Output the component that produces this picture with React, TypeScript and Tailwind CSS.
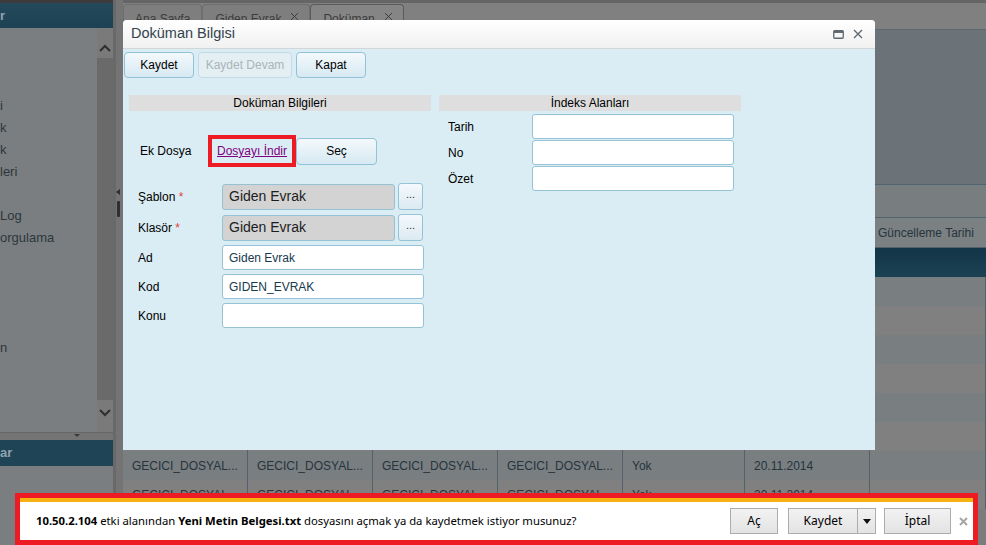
import { X } from "lucide-react"

const sideItems = ["", "", "", "i", "k", "k", "leri", "", "Log", "orgulama", "", "", "", "", "n"]

const gridCols = ["w-[125px]", "w-[125px]", "w-[125px]", "w-[125px]", "w-[122px]", "w-[125px]", "flex-1"]

const dataRows = [
  ["GECICI_DOSYAL...", "GECICI_DOSYAL...", "GECICI_DOSYAL...", "GECICI_DOSYAL...", "Yok", "20.11.2014", ""],
  ["GECICI_DOSYAL...", "GECICI_DOSYAL...", "GECICI_DOSYAL...", "GECICI_DOSYAL...", "Yok", "20.11.2014", ""],
]

function GridRow({ cells, dark }: { cells: string[]; dark: boolean }) {
  return (
    <div className={`flex h-[29px] shrink-0 ${dark ? "bg-[#797e81]" : "bg-[#808080]"}`}>
      {gridCols.map((w, i) => (
        <div
          key={i}
          className={`${w} flex items-center border-r border-[#55616a] pl-[9px] text-[12px] text-[#26343d] whitespace-nowrap overflow-hidden`}
        >
          {cells[i]}
        </div>
      ))}
    </div>
  )
}

function BlueButton({ children, className = "", disabled = false }: { children: React.ReactNode; className?: string; disabled?: boolean }) {
  return (
    <div
      className={`flex items-center justify-center rounded-[4px] border text-[12px] ${
        disabled
          ? "border-[#c3dbe6] bg-[#e4eff4] text-[#a9b4b9]"
          : "border-[#91c2d7] bg-gradient-to-b from-[#f3f9fc] to-[#d7e9f2] text-black"
      } ${className}`}
    >
      {children}
    </div>
  )
}

function Field({ label, req = false, value = "", gray = false, picker = false }: { label: string; req?: boolean; value?: string; gray?: boolean; picker?: boolean }) {
  return (
    <div className="flex items-center">
      <div className="w-[93px] pl-[9px] text-[12px] text-black">
        {label}
        {req && <span className="text-[#e0433a]"> *</span>}
      </div>
      {gray ? (
        <div className="flex items-center gap-[3px]">
          <div className="flex h-[26px] w-[173px] items-center rounded-[3px] border border-[#96c2d6] bg-[#d3d3d3] pl-[6px] text-[14px] text-[#1d1d1d]">
            {value}
          </div>
          {picker && (
            <div className="flex h-[27px] w-[25px] items-center justify-center rounded-[3px] border border-[#96c2d6] bg-gradient-to-b from-[#f4f9fc] to-[#dbeaf2] pb-[4px] text-[11px] text-[#333]">
              ...
            </div>
          )}
        </div>
      ) : (
        <div className="flex h-[25px] w-[202px] items-center rounded-[3px] border border-[#96c2d6] bg-white pl-[6px] text-[12px] text-[#17394d]">
          {value}
        </div>
      )}
    </div>
  )
}

export default function App() {
  return (
    <div className="relative h-[545px] w-[986px] overflow-hidden bg-[#7c7c7c] font-['Liberation_Sans',Arial,sans-serif]">
      {/* dimmed application behind the dialog */}
      <div className="flex h-full">
        <div className="flex w-[113px] flex-col bg-[#7b7e80]">
          <div className="h-[3px] bg-[#3c3c3c]" />
          <div className="flex h-[25px] items-center bg-gradient-to-b from-[#24495a] to-[#1d4253] text-[13px] font-bold text-[#8fa3ad]">
            <span>r</span>
          </div>
          <div className="flex h-[404px]">
            <div className="flex-1 pt-[1px] text-[13px] text-[#2c373d]">
              {sideItems.map((t, i) => (
                <div key={i} className="flex h-[22px] items-center overflow-hidden whitespace-nowrap">
                  <span>{t}</span>
                </div>
              ))}
            </div>
            <div className="flex w-[16px] flex-col bg-[#7a7a7a]">
              <div className="h-[8px]" />
              <svg width="16" height="10" viewBox="0 0 16 10" className="mt-[7px]">
                <path d="M3 8 L8 3 L13 8" fill="none" stroke="#2f2f2f" strokeWidth="2" />
              </svg>
              <div className="mt-[5px] h-[342px] bg-[#6a6a6a]" />
              <div className="flex-1" />
              <svg width="16" height="10" viewBox="0 0 16 10" className="mb-[14px]">
                <path d="M3 2 L8 7 L13 2" fill="none" stroke="#2f2f2f" strokeWidth="2" />
              </svg>
            </div>
          </div>
          <div className="flex h-[8px] items-start justify-center border-t border-[#666] bg-[#747474] pl-[40px]">
            <svg width="8" height="5" viewBox="0 0 8 5">
              <path d="M1 1 L7 1 L4 4 Z" fill="#3a3a3a" />
            </svg>
          </div>
          <div className="flex h-[26px] items-center bg-[#1f4455] text-[13px] font-bold text-[#8fa3ad]">
            <span>ar</span>
          </div>
          <div className="flex-1 bg-[#7b7e80]" />
        </div>
        <div className="flex w-[10px] items-center border-l-[3px] border-[#696969] bg-[#747474]">
          <div className="mt-[-140px] flex flex-col items-center gap-[6px]">
            <svg width="5" height="6" viewBox="0 0 5 6">
              <path d="M4 0 L0 3 L4 6 Z" fill="#2f2f2f" />
            </svg>
            <div className="h-[16px] w-[3px] rounded-[1px] bg-[#2f2f2f]" />
          </div>
        </div>
        <div className="flex flex-1 flex-col">
          <div className="h-[3px] bg-[#656565]" />
          <div className="flex h-[27px] items-start border-b border-[#5f6a70] bg-[#808080] pt-[1px]">
            {["Ana Sayfa", "Giden Evrak", "Doküman"].map((t, i) => (
              <div
                key={t}
                className={`flex h-[26px] items-start gap-[7px] rounded-t-[4px] border border-b-0 pt-[5px] text-[12px] ${
                  i === 0 ? "px-[11px]" : "pl-[12px] pr-[8px]"
                } ${i === 2 ? "border-[#5a5a5a] bg-[#858585] text-[#3a3a3a]" : "border-[#6e6e6e] bg-[#7e7e7e] text-[#3c3c3c]"}`}
              >
                {t}
                {i > 0 && <X size={13} strokeWidth={1.6} className="mt-[0px] text-[#333]" />}
              </div>
            ))}
          </div>
          <div className="h-[154px] bg-[#6b7379]" />
          <div className="h-[34px] border-y border-[#4f6470] bg-[#787e80]" />
          <div className="flex h-[30px] shrink-0 border-b border-[#55616a] bg-[#7b8083]">
            {gridCols.map((w, i) => (
              <div key={i} className={`${w} flex items-center pl-[8px] text-[12px] text-[#26343d]`}>
                {i === 6 ? "Güncelleme Tarihi" : ""}
              </div>
            ))}
          </div>
          <div className="h-[29px] shrink-0 bg-gradient-to-b from-[#123547] to-[#1b4253]" />
          <GridRow cells={[]} dark />
          <GridRow cells={[]} dark={false} />
          <GridRow cells={[]} dark />
          <GridRow cells={[]} dark={false} />
          <GridRow cells={[]} dark />
          <GridRow cells={[]} dark={false} />
          <GridRow cells={dataRows[0]} dark />
          <GridRow cells={dataRows[1]} dark={false} />
        </div>
      </div>

      {/* dialog */}
      <div className="absolute left-[123px] top-[20px] flex h-[430px] w-[752px] flex-col overflow-hidden rounded-t-[4px] bg-[#daecf4]">
        <div className="flex h-[29px] shrink-0 items-center justify-between border-b border-[#d3d6d8] bg-gradient-to-b from-[#ffffff] to-[#f1f1f1] pl-[8px] pr-[12px]">
          <span className="text-[14.5px] text-[#34434d]">Doküman Bilgisi</span>
          <div className="flex items-center gap-[9px]">
            <svg width="11" height="9" viewBox="0 0 11 9">
              <rect x="0.75" y="0.75" width="9.5" height="7.5" rx="1" fill="none" stroke="#5c6770" strokeWidth="1.3" />
              <rect x="0.75" y="0.75" width="9.5" height="2.2" fill="#5c6770" />
            </svg>
            <svg width="10" height="10" viewBox="0 0 10 10">
              <path d="M1 1 L9 9 M9 1 L1 9" stroke="#5c6770" strokeWidth="1.3" />
            </svg>
          </div>
        </div>
        <div className="flex gap-[4px] pl-[1px] pt-[3px]">
          <BlueButton className="h-[26px] w-[70px]">Kaydet</BlueButton>
          <BlueButton className="h-[26px] w-[94px]" disabled>
            Kaydet Devam
          </BlueButton>
          <BlueButton className="h-[26px] w-[70px]">Kapat</BlueButton>
        </div>
        <div className="flex gap-[8px] pl-[6px] pt-[17px]">
          <div className="flex w-[302px] flex-col">
            <div className="flex h-[16px] items-center justify-center bg-[#dedede] text-[12px] text-black">Doküman Bilgileri</div>
            <div className="flex items-center pt-[24px]">
              <div className="w-[79px] pl-[11px] text-[12px] text-black">Ek Dosya</div>
              <div className="flex h-[32px] w-[88px] items-center justify-center border-[4px] border-[#ed1c24]">
                <span className="text-[12px] text-[#800080] underline">Dosyayı İndir</span>
              </div>
              <BlueButton className="h-[27px] w-[81px] text-[12px]">Seç</BlueButton>
            </div>
            <div className="flex flex-col gap-[4px] pt-[16px]">
              <Field label="Şablon" req gray picker value="Giden Evrak" />
              <Field label="Klasör" req gray picker value="Giden Evrak" />
              <Field label="Ad" value="Giden Evrak" />
              <Field label="Kod" value="GIDEN_EVRAK" />
              <Field label="Konu" />
            </div>
          </div>
          <div className="flex w-[302px] flex-col">
            <div className="flex h-[16px] items-center justify-center bg-[#dedede] text-[12px] text-black">İndeks Alanları</div>
            <div className="flex flex-col gap-[1px] pt-[3px]">
              {["Tarih", "No", "Özet"].map((l) => (
                <div key={l} className="flex items-center">
                  <div className="w-[93px] pl-[9px] text-[12px] text-black">{l}</div>
                  <div className="h-[25px] w-[202px] rounded-[3px] border border-[#96c2d6] bg-white" />
                </div>
              ))}
            </div>
          </div>
        </div>
      </div>

      {/* download notification bar */}
      <div className="absolute left-[15px] top-[493px] flex h-[52px] w-[963px] flex-col border-[5px] border-[#ed1c24] bg-white font-['Noto_Sans',sans-serif]">
        <div className="h-[4px] shrink-0 bg-[#f5b211]" />
        <div className="flex flex-1 items-center pl-[16px] pr-[5px] text-[12px] text-black">
          <div className="flex-1 whitespace-nowrap text-[11.3px]">
            <b>10.50.2.104</b> etki alanından <b>Yeni Metin Belgesi.txt</b> dosyasını açmak ya da kaydetmek istiyor musunuz?
          </div>
          <div className="flex h-[26px] w-[48px] items-center justify-center border border-[#acacac] bg-gradient-to-b from-[#f2f2f2] to-[#e3e3e3]">Aç</div>
          <div className="ml-[10px] flex h-[26px] w-[88px] border border-[#acacac] bg-gradient-to-b from-[#f2f2f2] to-[#e3e3e3]">
            <div className="flex flex-1 items-center justify-center border-r border-[#acacac]">Kaydet</div>
            <div className="flex w-[17px] items-center justify-center">
              <svg width="8" height="5" viewBox="0 0 8 5">
                <path d="M0 0 L8 0 L4 5 Z" fill="#111" />
              </svg>
            </div>
          </div>
          <div className="ml-[8px] flex h-[26px] w-[67px] items-center justify-center border border-[#acacac] bg-gradient-to-b from-[#f2f2f2] to-[#e3e3e3]">İptal</div>
          <svg width="9" height="9" viewBox="0 0 9 9" className="ml-[8px]">
            <path d="M1 1 L8 8 M8 1 L1 8" stroke="#a5a5a5" strokeWidth="2" />
          </svg>
        </div>
      </div>
    </div>
  )
}
